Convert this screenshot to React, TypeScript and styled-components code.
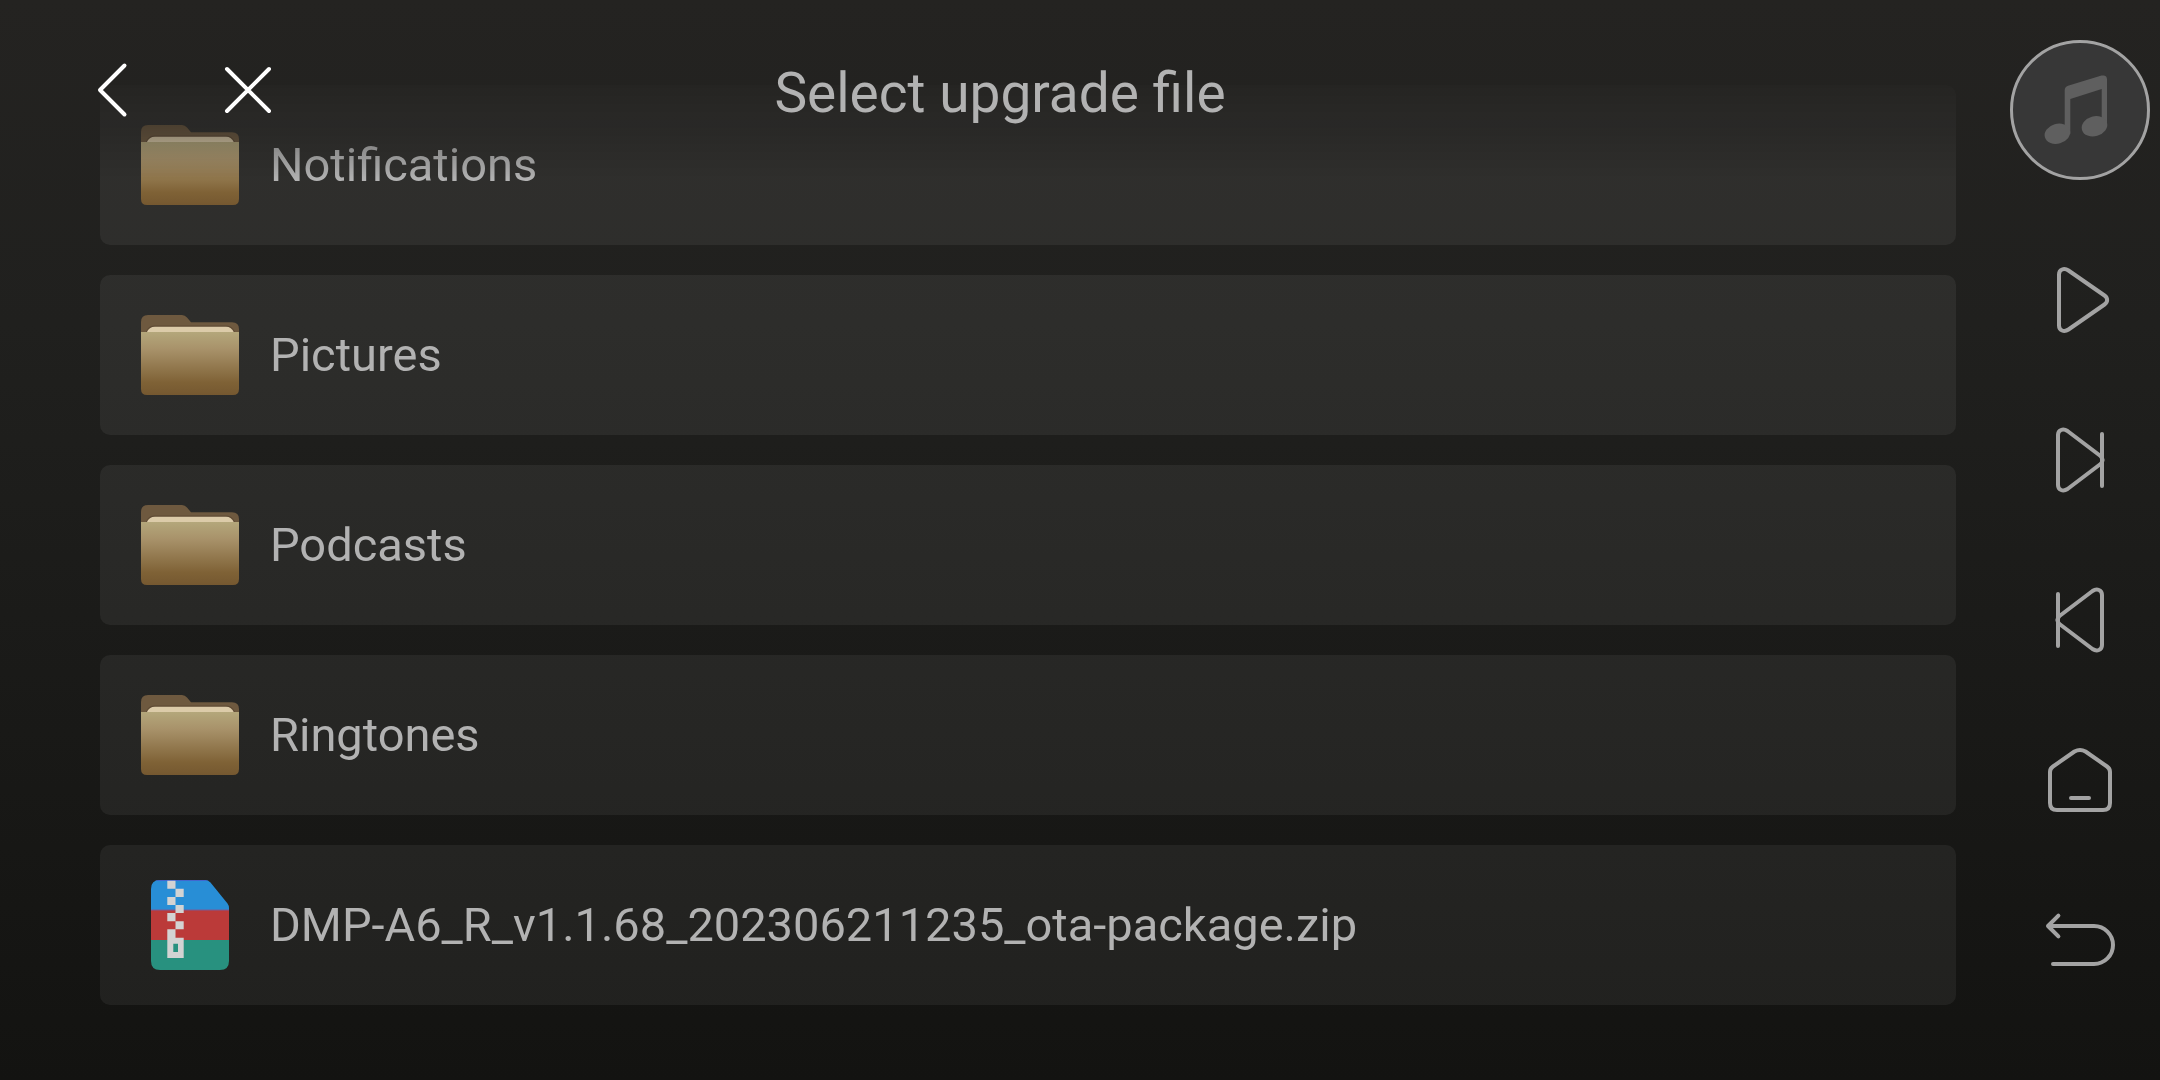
import React from "react";
import styled, { createGlobalStyle } from "styled-components";

const GlobalStyle = createGlobalStyle`
  * { box-sizing: border-box; }
  body {
    margin: 0;
    background: #131311;
    font-family: Roboto, "Noto Sans", sans-serif;
    color: #b2b2b2;
  }
`;

const Screen = styled.div`
  display: flex;
  min-height: 100vh;
  background: linear-gradient(180deg, #242321 0%, #20201e 30%, #131311 100%);
`;

const Main = styled.main`
  flex: 1;
  min-width: 0;
  display: grid;
  grid-template-columns: minmax(0, 1fr);
  align-items: start;
`;

const Header = styled.header`
  grid-area: 1 / 1;
  z-index: 1;
  display: grid;
  grid-template-columns: 1fr auto 1fr;
  align-items: center;
  height: 180px;
  padding: 0 80px;
`;

const HeaderActions = styled.div`
  display: flex;
  gap: 72px;
`;

const IconButton = styled.button`
  display: grid;
  place-items: center;
  padding: 0;
  border: 0;
  background: none;
  color: inherit;
  cursor: pointer;
`;

const HeaderButton = styled(IconButton)`
  width: 64px;
  height: 64px;
  color: #fff;
`;

const Title = styled.h1`
  margin: 0;
  padding-top: 6px;
  font-size: 55px;
  line-height: 66px;
  font-weight: 400;
`;

const FileList = styled.ul`
  grid-area: 1 / 1;
  display: flex;
  flex-direction: column;
  gap: 30px;
  margin: 0;
  padding: 85px 44px 75px 100px;
  list-style: none;
  mask-image: linear-gradient(180deg, transparent 60px, #000 180px);
`;

const FileRow = styled.button`
  display: flex;
  align-items: center;
  gap: 30px;
  width: 100%;
  height: 160px;
  padding: 0 40px;
  border: 0;
  border-radius: 10px;
  background: rgba(255, 255, 255, 0.06);
  color: inherit;
  font: inherit;
  font-size: 47px;
  line-height: 56px;
  text-align: left;
  cursor: pointer;
`;

const FileIcon = styled.span`
  display: grid;
  place-items: center;
  flex: none;
  width: 100px;
`;

const FileName = styled.span`
  min-width: 0;
  overflow: hidden;
  text-overflow: ellipsis;
  white-space: nowrap;
`;

const Sidebar = styled.nav`
  display: flex;
  flex-direction: column;
  align-items: center;
  flex: none;
  width: 160px;
  padding-top: 40px;
  color: #a3a3a3;
`;

const Disc = styled(IconButton)`
  width: 140px;
  height: 140px;
  margin-bottom: 40px;
  border: 3px solid #a3a3a3;
  border-radius: 50%;
  background: #373737;
  color: #5f5f5f;
`;

const SideButton = styled(IconButton)`
  width: 160px;
  height: 160px;
`;

const Stroke = styled.svg.attrs({ fill: "none", stroke: "currentColor", strokeWidth: 4, strokeLinecap: "round", strokeLinejoin: "round", "aria-hidden": true })`
  display: block;
`;

const Glyph = styled.svg.attrs({ "aria-hidden": true })`
  display: block;
`;

const FolderIcon = () => (
  <Glyph width="98" height="80" viewBox="0 0 98 80">
    <defs>
      <linearGradient id="folder-front" x1="0" y1="0" x2="0" y2="1">
        <stop offset="0" stopColor="#b4a77b" />
        <stop offset="0.27" stopColor="#a8926a" />
        <stop offset="0.8" stopColor="#7f6236" />
        <stop offset="1" stopColor="#755830" />
      </linearGradient>
    </defs>
    <path fill="#6e593f" d="M0 30V7Q0 0 7 0H41Q44 0 46 2.500L50 7.300H91Q98 7.300 98 14V30Z" />
    <path fill="#5f4b35" d="M5 17Q7 10.500 13 10.500H86Q91 10.500 94 17Z" />
    <path fill="#dccba9" d="M5.700 17.500Q8 11.700 14 11.700H85Q90.500 11.700 93 17.500Z" />
    <path fill="url(#folder-front)" d="M0 17H98V74Q98 80 92 80H6Q0 80 0 74Z" />
  </Glyph>
);

const ZipIcon = () => (
  <Glyph width="78" height="90" viewBox="0 0 78 90">
    <defs>
      <clipPath id="zip-shape">
        <path d="M9 0H54Q57.500 0 59.500 2.500L76.500 23.500Q78 25.500 78 28V81Q78 90 69 90H9Q0 90 0 81V9Q0 0 9 0Z" />
      </clipPath>
    </defs>
    <g clipPath="url(#zip-shape)">
      <path fill="#288ed6" d="M0 0H78V30H0Z" />
      <path fill="#4266cf" d="M0 0H78V1H0Z" />
      <path fill="#bb3a39" d="M0 30H78V60H0Z" />
      <path fill="#7b5a95" d="M0 29.500H78V30.400H0Z" />
      <path fill="#28917f" d="M0 60H78V90H0Z" />
    </g>
    <path
      fill="#d3d3d3"
      fillRule="evenodd"
      d="M16.300 .7h8.200v8.100h-8.200zM24.500 8.800h8.200v8.100h-8.200zM16.300 16.900h8.200V25h-8.200zM24.500 25h8.200v8.100h-8.200zM16.300 33.100h8.200v8.100h-8.200zM24.500 41.200h8.200v8.100h-8.200zM16.300 49.300h8.200v8.400h8.200V78H16.300zM22.300 63.700V72H27V63.700z"
    />
  </Glyph>
);

const MusicIcon = () => (
  <Glyph width="134" height="134" viewBox="3 3 134 134" fill="currentColor">
    <path d="M54.700 94V50.500Q54.700 47 58 45.800L91.500 35.600Q97 34.500 97 39.500V86.500H91.700V49L60.300 59V94Z" />
    <ellipse cx="47.400" cy="93.700" rx="13" ry="9.900" transform="rotate(-16 47.400 93.700)" />
    <ellipse cx="84.500" cy="86.300" rx="13" ry="9.900" transform="rotate(-16 84.500 86.300)" />
  </Glyph>
);

const SKIP = "M18 15C18 10 23 8 27.500 11L60.500 36C63 38.500 63 41.500 60.500 44L27.500 69C23 72 18 70 18 65Z M62 14V66";

const controls = [
  { label: "Play", art: <path d="M19 14.500C19 9.500 24 7.500 28.500 10.500L64.500 35.500C68 38 68 42 64.500 44.500L28.500 69.500C24 72.500 19 70.500 19 65.500Z" /> },
  { label: "Next track", art: <path d={SKIP} /> },
  { label: "Previous track", art: <path d={SKIP} transform="matrix(-1 0 0 1 80 0)" /> },
  { label: "Home", art: <path d="M10 32Q10 28.500 13 26.500L34.500 11.500Q40 8.500 45.500 11.500L67 26.500Q70 28.500 70 32V63Q70 70 63 70H17Q10 70 10 63Z M31 58H49" /> },
  { label: "Back", art: <path d="M18.400 15.600L8 26L18.400 36.400M8 26H54A19 19 0 0 1 54 64H13" /> },
];

const files = [
  { name: "Notifications", kind: "folder" },
  { name: "Pictures", kind: "folder" },
  { name: "Podcasts", kind: "folder" },
  { name: "Ringtones", kind: "folder" },
  { name: "DMP-A6_R_v1.1.68_202306211235_ota-package.zip", kind: "zip" },
];

export default function App() {
  return (
    <>
      <GlobalStyle />
      <Screen>
        <Main>
          <Header>
            <HeaderActions>
              <HeaderButton type="button" aria-label="Go back">
                <Stroke width="64" height="64" viewBox="0 0 64 64">
                  <path d="M44.500 7.500L20 32L44.500 56.500" />
                </Stroke>
              </HeaderButton>
              <HeaderButton type="button" aria-label="Close">
                <Stroke width="64" height="64" viewBox="0 0 64 64">
                  <path d="M11 11L53 53M53 11L11 53" />
                </Stroke>
              </HeaderButton>
            </HeaderActions>
            <Title>Select upgrade file</Title>
          </Header>
          <FileList>
            {files.map((file) => (
              <li key={file.name}>
                <FileRow type="button">
                  <FileIcon>{file.kind === "zip" ? <ZipIcon /> : <FolderIcon />}</FileIcon>
                  <FileName>{file.name}</FileName>
                </FileRow>
              </li>
            ))}
          </FileList>
        </Main>
        <Sidebar aria-label="Player controls">
          <Disc type="button" aria-label="Now playing">
            <MusicIcon />
          </Disc>
          {controls.map((control) => (
            <SideButton key={control.label} type="button" aria-label={control.label}>
              <Stroke width="80" height="80" viewBox="0 0 80 80">
                {control.art}
              </Stroke>
            </SideButton>
          ))}
        </Sidebar>
      </Screen>
    </>
  );
}
